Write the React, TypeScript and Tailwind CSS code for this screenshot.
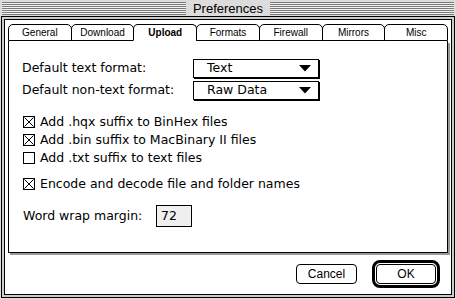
import React from 'react';

const tabs = ['General', 'Download', 'Upload', 'Formats', 'Firewall', 'Mirrors', 'Misc'];

const body = "font-['DejaVu_Sans',sans-serif] text-[12.5px] text-black";

const Stripes = () => (
	<div className="h-[13px] flex-1 bg-[repeating-linear-gradient(to_bottom,#7a7a7a_0px,#7a7a7a_1px,#f2f2f2_1px,#f2f2f2_2px)]" />
);

const Select = ({ value }: { value: string }) => (
	<div className="flex h-[19px] w-[126px] items-center justify-between border border-black bg-white pl-[13px] pr-[7px] shadow-[1px_1px_0_#000]">
		<span className="leading-none">{value}</span>
		<svg width="12" height="7" viewBox="0 0 12 7">
			<polygon points="0,0 12,0 6,6.5" fill="#000" />
		</svg>
	</div>
);

const Checkbox = ({ checked, label }: { checked: boolean; label: string }) => (
	<div className="flex h-[18px] items-center gap-[5px]">
		<svg width="12" height="12" viewBox="0 0 12 12" className="shrink-0">
			<rect x="0.5" y="0.5" width="11" height="11" fill="#fff" stroke="#000" />
			{checked && (
				<path d="M1.5 1.5 L10.5 10.5 M10.5 1.5 L1.5 10.5" stroke="#000" strokeWidth="1" />
			)}
		</svg>
		<span className="leading-none">{label}</span>
	</div>
);

export default function App() {
	return (
		<div className="flex h-[299px] w-[456px] flex-col bg-[#dcdcdc]">
			{/* title bar */}
			<div className="flex h-[16px] shrink-0 items-center px-[2px]">
				<Stripes />
				<span className="px-[7px] font-['Liberation_Sans',sans-serif] text-[13px] leading-none text-black">
					Preferences
				</span>
				<Stripes />
			</div>

			{/* window frame */}
			<div className="mx-[1px] mb-[1px] flex flex-1 flex-col border border-black bg-[#cccccc] p-[2px]">
				<div className="flex flex-1 flex-col border border-black bg-white px-[2px] pt-[4px]">
					{/* tabs */}
					<div className="flex h-[17px] pl-[1px] pr-[1px]">
						{tabs.map((t, i) => {
							const active = t === 'Upload';
							return (
								<div
									key={t}
									className={
										'flex flex-1 items-center justify-center rounded-t-[5px] border border-black font-[\'Liberation_Sans\',sans-serif] text-[10px] leading-none ' +
										(i > 0 ? '-ml-px ' : '') +
										(active ? 'border-b-white font-bold' : '')
									}
								>
									{t}
								</div>
							);
						})}
					</div>

					{/* panel */}
					<div className={`ml-[1px] mr-[1px] flex h-[212px] flex-col border border-t-0 border-black pl-[13px] pt-[18px] shadow-[2px_2px_0_#999] ${body}`}>
						<div className="flex h-[19px] items-center">
							<span className="w-[171px]">Default text format:</span>
							<Select value="Text" />
						</div>
						<div className="mt-[3px] flex h-[19px] items-center">
							<span className="w-[171px]">Default non-text format:</span>
							<Select value="Raw Data" />
						</div>

						<div className="mt-[13px] flex flex-col pl-[1px]">
							<Checkbox checked label="Add .hqx suffix to BinHex files" />
							<Checkbox checked label="Add .bin suffix to MacBinary II files" />
							<Checkbox checked={false} label="Add .txt suffix to text files" />
							<div className="mt-[8px]">
								<Checkbox checked label="Encode and decode file and folder names" />
							</div>
						</div>

						<div className="mt-[12px] flex items-center pl-[1px]">
							<span className="w-[133px]">Word wrap margin:</span>
							<div className="flex h-[22px] w-[36px] items-center border border-black bg-[#efefef] pl-[4px]">72</div>
						</div>
					</div>

					{/* buttons */}
					<div className="flex flex-1 items-center justify-end gap-[15px] pr-[9px] font-['Liberation_Sans',sans-serif] text-[12px]">
						<div className="flex h-[20px] w-[61px] items-center justify-center rounded-[4px] border border-black">
							Cancel
						</div>
						<div className="flex h-[28px] w-[68px] rounded-[8px] border-[3px] border-black p-[1px]">
							<div className="flex flex-1 items-center justify-center rounded-[4px] border border-black">OK</div>
						</div>
					</div>
				</div>
			</div>
		</div>
	);
}
